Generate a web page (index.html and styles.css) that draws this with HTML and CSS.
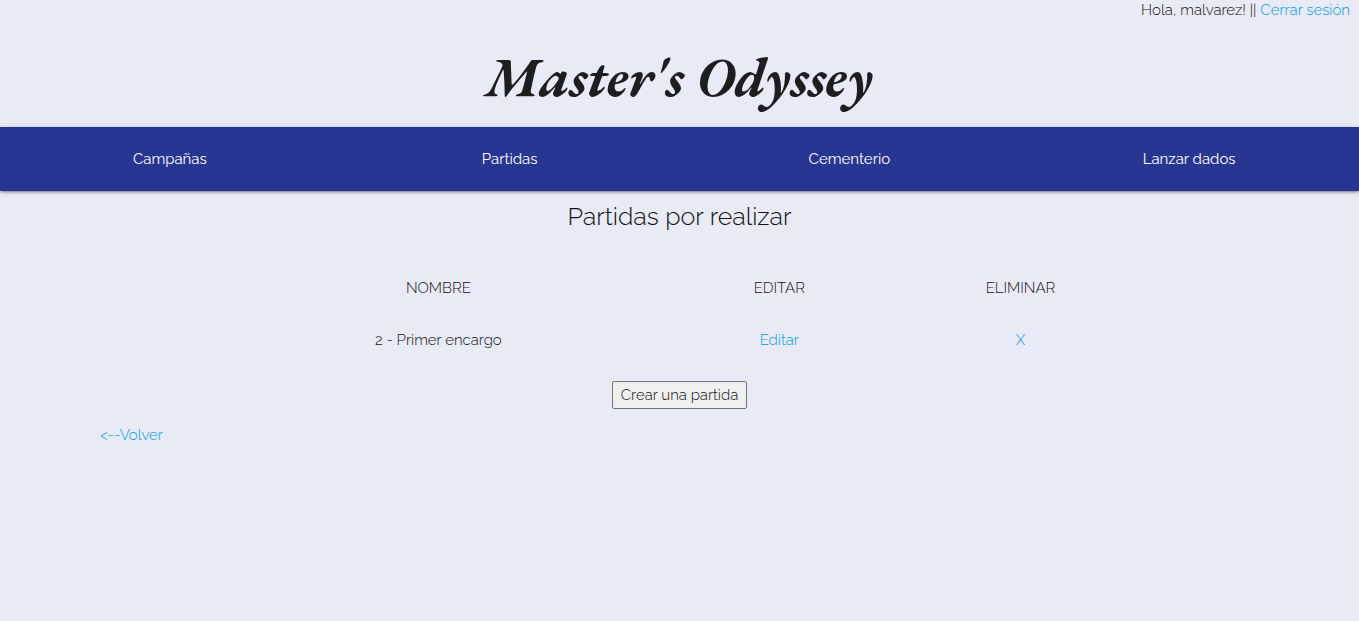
FILE: index.html
```html
<!DOCTYPE html>
<html lang="es">
<head>
<meta charset="utf-8">
<meta name="viewport" content="width=device-width, initial-scale=1">
<title>Master's Odyssey</title>
<link rel="stylesheet" href="styles.css">
</head>
<body>
<header>
  <div class="session">Hola, malvarez! || <a href="#">Cerrar sesión</a></div>
  <h1 class="logo">Master's Odyssey</h1>
  <nav class="menu">
    <a href="#">Campañas</a>
    <a href="#">Partidas</a>
    <a href="#">Cementerio</a>
    <a href="#">Lanzar dados</a>
  </nav>
</header>
<main>
  <h2 class="title">Partidas por realizar</h2>
  <table class="games">
    <thead>
      <tr><th class="name">NOMBRE</th><th class="edit">EDITAR</th><th>ELIMINAR</th></tr>
    </thead>
    <tbody>
      <tr><td>2 - Primer encargo</td><td><a href="#">Editar</a></td><td><a href="#">X</a></td></tr>
    </tbody>
  </table>
  <button class="create" type="button">Crear una partida</button>
  <a class="back" href="#">&lt;--Volver</a>
</main>
</body>
</html>
```
FILE: styles.css
```css
* {
  box-sizing: border-box;
}

body {
  margin: 0;
  background: #e8eaf6;
  color: #111;
  font: 300 15px/20px Raleway, Lato, "Open Sans", sans-serif;
}

a {
  color: #039be5;
  text-decoration: none;
}

.session {
  padding: 0 9px;
  text-align: right;
}

.logo {
  margin: 0;
  padding: 25px 0 18px;
  color: #1e1e20;
  font: italic 700 55px/64px "EB Garamond", "Liberation Serif", serif;
  text-align: center;
}

.menu {
  display: grid;
  grid-template-columns: repeat(4, 1fr);
  background: #283593;
  box-shadow: 0 2px 2px rgba(0, 0, 0, 0.14), 0 3px 1px -2px rgba(0, 0, 0, 0.12), 0 1px 5px rgba(0, 0, 0, 0.2);
}

.menu a {
  color: #fff;
  font-weight: 400;
  line-height: 64px;
  text-align: center;
}

main {
  display: flex;
  flex-direction: column;
  align-items: center;
}

.title {
  margin: 7px 0 28px;
  font-size: 25px;
  font-weight: 300;
  line-height: 36px;
}

.games {
  width: 65%;
  table-layout: fixed;
  border-collapse: collapse;
  text-align: center;
}

.games th,
.games td {
  padding: 16px 0;
  font-weight: inherit;
}

.games .name {
  width: 45.4%;
}

.games .edit {
  width: 31.8%;
}

.create {
  margin: 15px 0 16px;
  padding: 3px 8px;
  border: 1px solid #767676;
  border-radius: 2px;
  background: #efefef;
  color: #111;
  font: inherit;
}

.back {
  align-self: flex-start;
  margin-left: 100px;
}
```
